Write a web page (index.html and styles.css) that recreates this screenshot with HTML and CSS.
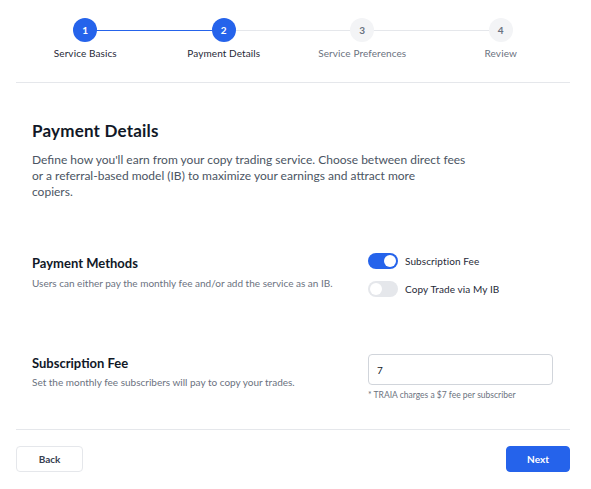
FILE: index.html
```html
<!DOCTYPE html>
<html>
<head>
<meta charset="utf-8">
<link rel="stylesheet" href="styles.css">
</head>
<body>
<div class="page">
  <div class="stepper">
    <div class="step done"><div class="circle">1</div><div class="label">Service Basics</div></div>
    <div class="step active"><div class="circle">2</div><div class="label">Payment Details</div></div>
    <div class="step"><div class="circle">3</div><div class="label">Service Preferences</div></div>
    <div class="step last"><div class="circle">4</div><div class="label">Review</div></div>
  </div>
  <hr class="divider">
  <div class="content">
    <h1 class="title">Payment Details</h1>
    <p class="intro">Define how you'll earn from your copy trading service. Choose between direct fees<br>or a referral-based model (IB) to maximize your earnings and attract more<br>copiers.</p>

    <div class="row methods">
      <div class="left">
        <h2 class="row-title">Payment Methods</h2>
        <p class="row-sub">Users can either pay the monthly fee and/or add the service as an IB.</p>
      </div>
      <div class="right toggles">
        <div class="toggle-row"><span class="toggle on"><span class="knob"></span></span><span class="toggle-label">Subscription Fee</span></div>
        <div class="toggle-row"><span class="toggle"><span class="knob"></span></span><span class="toggle-label">Copy Trade via My IB</span></div>
      </div>
    </div>

    <div class="row fee">
      <div class="left">
        <h2 class="row-title">Subscription Fee</h2>
        <p class="row-sub tight">Set the monthly fee subscribers will pay to copy your trades.</p>
      </div>
      <div class="right">
        <div class="input">7</div>
        <p class="note">* TRAIA charges a $7 fee per subscriber</p>
      </div>
    </div>
  </div>
  <hr class="divider bottom">
  <div class="actions">
    <button class="btn back">Back</button>
    <button class="btn next">Next</button>
  </div>
</div>
</body>
</html>
```

FILE: styles.css
```css
* { box-sizing: border-box; }
html, body { margin: 0; padding: 0; background: #fff; }
body { font-family: Lato, "Noto Sans", sans-serif; color: #111827; }

.page { padding: 0 21px 0 16px; }

.stepper { display: grid; grid-template-columns: repeat(4, 1fr); padding-top: 18px; }
.step { position: relative; display: flex; flex-direction: column; align-items: center; }
.step::after {
  content: ""; position: absolute; top: 11.5px; left: 50%; width: 100%; height: 1px;
  background: #e5e7eb; z-index: 0;
}
.step.done::after { background: #2563eb; height: 1.5px; }
.step.last::after { display: none; }
.circle {
  position: relative; z-index: 1; width: 24px; height: 24px; border-radius: 50%;
  background: #f3f4f6; color: #6b7280; font-size: 10px; font-weight: 700;
  display: flex; align-items: center; justify-content: center;
}
.step.done .circle, .step.active .circle { background: #2563eb; color: #fff; }
.label { margin-top: 4px; font-size: 10px; line-height: 14px; color: #6b7280; letter-spacing: 0.1px; }
.step.done .label, .step.active .label { color: #1f2937; }

.divider { border: 0; height: 1px; background: #e5e7eb; margin: 22px 0 0; }
.divider.bottom { margin-top: 0; }

.content { padding: 37px 0 0 16px; }
.title { margin: 0; font-size: 17px; line-height: 22px; font-weight: 700; color: #111827; letter-spacing: 0.2px; }
.intro { margin: 10px 0 0; font-size: 12px; line-height: 16px; color: #4b5563; }

.row { display: grid; grid-template-columns: 1fr 185px; column-gap: 16px; margin-right: 17px; }
.methods { margin-top: 53px; }
.fee { margin-top: 57px; padding-bottom: 28px; }
.row-title { margin: 0; font-size: 13px; line-height: 18px; font-weight: 700; color: #111827; }
.methods .row-title { margin-top: 1px; }
.row-sub { margin: 4px 0 0; font-size: 10px; line-height: 14px; color: #6b7280; }
.row-sub.tight { margin-top: 3px; }

.toggles { display: flex; flex-direction: column; gap: 12px; }
.toggle-row { display: flex; align-items: center; gap: 7px; height: 16px; }
.toggle { width: 30px; height: 16px; border-radius: 8px; background: #e5e7eb; position: relative; display: flex; align-items: center; padding: 2px; }
.toggle.on { background: #2563eb; justify-content: flex-end; }
.knob { width: 12px; height: 12px; border-radius: 50%; background: #fff; }
.toggle-label { font-size: 10px; color: #1f2937; letter-spacing: 0.1px; }

.input {
  height: 31px; border: 1px solid #d1d5db; border-radius: 4px; padding: 0 8px;
  display: flex; align-items: center; font-size: 10px; color: #111827;
}
.note { margin: 5px 0 0; font-size: 8.5px; line-height: 11px; color: #6b7280; }

.actions { display: flex; justify-content: space-between; padding-top: 16px; }
.btn {
  height: 26px; border-radius: 4px; font-family: inherit; font-size: 10px; font-weight: 700; cursor: pointer;
}
.back { width: 67px; background: #fff; border: 1px solid #e5e7eb; color: #374151; }
.next { width: 64px; background: #2563eb; border: 1px solid #2563eb; color: #fff; }
```
